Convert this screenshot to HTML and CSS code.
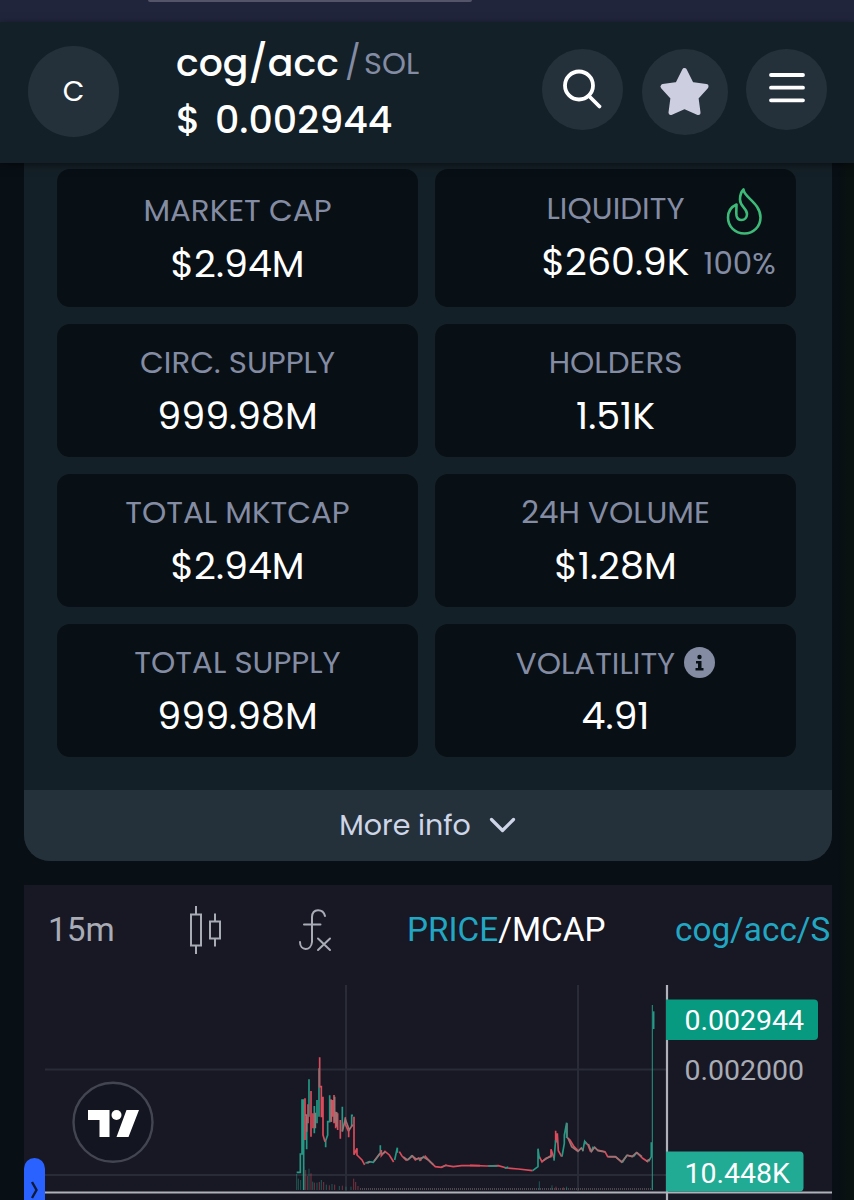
FILE: index.html
```html
<!DOCTYPE html>
<html lang="en">
	<head>
		<meta charset="utf-8">
		<title>cog/acc / SOL</title>
		<link rel="stylesheet" href="styles.css">
	</head>
	<body>
		<div class="browser"><div class="urlbar"></div></div>
		<header class="header">
			<div class="avatar">C</div>
			<div class="pair">
				<div class="pairName"><span class="token">cog/acc</span><span class="slash">/</span><span class="quote">SOL</span></div>
				<div class="price"><span class="currency">$</span><span class="amount">0.002944</span></div>
			</div>
			<div class="round search">
				<svg width="81" height="81" viewBox="0 0 81 81"><circle cx="37" cy="36.500" r="14" /><path d="M47 47L57.500 57.500" /></svg>
			</div>
			<div class="round star">
				<svg width="86" height="86" viewBox="0 0 86 86"><path d="M42.500 21.500L49.500 35.500L64 37.500L54 48.500L56 63.500L42.500 57.500L29 63.500L31 48.500L21 37.500L35.500 35.500Z" /></svg>
			</div>
			<div class="round menu">
				<svg width="81" height="81" viewBox="0 0 81 81"><path d="M25 26H57M25 38.700H57M25 51.300H57" /></svg>
			</div>
		</header>

		<main class="panel">
			<div class="stats">
				<div class="card">
					<div class="label">MARKET CAP</div>
					<div class="value">$2.94M</div>
				</div>
				<div class="card liquidity">
					<div class="main">
						<div class="label">LIQUIDITY</div>
						<div class="value">$260.9K</div>
					</div>
					<div class="burn">
						<svg width="40" height="50" viewBox="0 0 40 50"><path d="M19.500 2.500C19.500 10 36.500 16 36.500 30.500C36.500 39.500 29.500 46.500 20.500 46.500C11 46.500 4 39.500 4 30.500C4 24.500 7 20 12.500 17.500C12.500 22 12 25 12.500 28.500C13 31.500 15 33 17.500 33C20.500 33 23 30.500 23 27C23 21 16 20 16 12.500C16 8 17 5 19.500 2.500Z" /></svg>
						<div class="percent">100%</div>
					</div>
				</div>
				<div class="card">
					<div class="label">CIRC. SUPPLY</div>
					<div class="value">999.98M</div>
				</div>
				<div class="card">
					<div class="label">HOLDERS</div>
					<div class="value">1.51K</div>
				</div>
				<div class="card">
					<div class="label">TOTAL MKTCAP</div>
					<div class="value">$2.94M</div>
				</div>
				<div class="card">
					<div class="label">24H VOLUME</div>
					<div class="value">$1.28M</div>
				</div>
				<div class="card">
					<div class="label">TOTAL SUPPLY</div>
					<div class="value">999.98M</div>
				</div>
				<div class="card">
					<div class="label volatility"><span>VOLATILITY</span>
						<svg class="info" width="31" height="31" viewBox="0 0 31 31"><circle class="disc" cx="15.500" cy="15.500" r="15.500" /><circle cx="15.500" cy="10" r="2.200" /><path d="M12 14H17.500V21H19.500V23.500H11.500V21H14V16.500H12Z" /></svg>
					</div>
					<div class="value">4.91</div>
				</div>
			</div>
			<div class="more">
				<span>More info</span>
				<svg width="27" height="17" viewBox="0 0 27 17"><path d="M2.500 2.500L13.500 13.500L24.500 2.500" /></svg>
			</div>
		</main>

		<section class="chart">
			<div class="toolbar">
				<span class="interval">15m</span>
				<svg class="candles" width="34" height="48" viewBox="0 0 34 48"><path d="M2 8.500H12V39.500H2ZM7 0V8.500M7 39.500V48M21 15.500H31V32.500H21ZM26 7.500V15.500M26 32.500V40.500" /></svg>
				<svg class="fx" width="34" height="44" viewBox="0 0 34 44"><path d="M27 8C25 0.500 14.500 0 14 9V34C13 43.500 2 43 2 34M6 16.500H22.500M20 30.500L32 42M32 30.500L20 42" /></svg>
				<span class="mode"><b>PRICE</b>/MCAP</span>
				<span class="symbol">cog/acc/S</span>
			</div>
			<svg class="plot" width="808" height="215" viewBox="24 985 808 215">
				<path class="grid" d="M346 985V1191M578 985V1191M45 1069.500H666M45 1175H666" />

				<!-- volume -->
				<g transform="translate(280 980) scale(.3333)">
					<path class="vol up" d="M50 582V630M55 596V630M62 600V630M71 560V630M87 566V630M98 605V630M111 608V630M124 600V630M139 614V630M156 612V630M178 618V630M198 620V630M213 620V630" />
					<path class="vol down" d="M77 570V630M82 588V630M93 580V630M103 608V630M118 606V630M131 606V630M148 616V630M164 614V630M187 617V630M221 596V630M227 606V630M234 618V630" />
					<path class="vol dots" d="M240 627H1118" />
					<path class="vol up" d="M778 604V630M816 616V630M860 620V630M1117 600V630" />
					<path class="vol down" d="M828 620V630M850 622V630" />
				</g>

				<!-- price, left half -->
				<g transform="translate(280 980) scale(.3333)">
					<path class="line up" d="M50 577H61V522H66V360H71V630M87 298V410M80 410V508M103 378V460M111 360V430M117 265V410M137 502V482L143 465V425H149V346M187 380V455M215 440V406H219M256 550L268 545L280 547L292 532L301 520V496M344 540L352 503V518M384 540L396 526M418 543L432 528M484 562L500 555" />
					<path class="line down" d="M75 355V480M84 430V373M93 333V470M99 445V400M119 232V320H124V412M129 350V465L135 485M153 358V425M158 360V410M162 345V430M167 395V445M173 400V450M181 420V476M196 412V433L206 455V472M222 410V524L231 505V525L246 540L254 555M304 510V527L315 514L328 525L341 546M358 515L366 528L380 542M396 526L406 540L416 534L424 542M434 527L450 545L466 560L484 562L497 556L520 560L545 557H600" />
					<path class="line mix" d="M75 405H80V455M106 398V445M154 360V425M164 350V425M170 396V440M187 454L196 418L208 450L218 434M262 550L270 545M282 544L300 520M306 522L316 516M370 531L382 540L397 528L408 537L420 535L432 532L445 540L460 554" />
				</g>

				<!-- price, right half -->
				<g transform="translate(470 980) scale(.3333)">
					<path class="line down" d="M0 556L50 558L85 557L110 564L145 567L188 572M208 530L216 546L228 535L243 530V508L252 535M257 452V485H262V460L265 512L275 530M291 430V472L300 480L312 500L324 512M345 485L354 495L362 515M382 510L405 515L413 530L438 531L457 548M475 527L490 530M500 517L518 535L535 546" />
					<path class="line up" d="M55 558H82M104 565L115 561M188 572L204 560V506L208 536M252 542L257 480M276 530L283 490V465L290 428V474M338 514L344 484L350 493M364 515L370 500M457 548L471 525M490 530L500 518M536 544L544 530V487" />
					<path class="line mix" d="M220 542L245 526M294 474L305 500L324 514L334 504L340 512M355 492L364 515L374 502L384 512L405 516M415 530L436 530L455 546L472 526L486 530L500 518L516 530M528 544L540 538" />
					<path class="line up thin" d="M547 75V630" />
					<path class="line up" d="M551 94V147" />
				</g>

				<path class="axis" d="M667 985V1200M45 1192.500H832" />
				<path class="tag price" d="M666 999.500H814Q818 999.500 818 1003.500V1036Q818 1040 814 1040H666Z" />
				<path class="tag volume" d="M666 1151.500H799.500Q803.500 1151.500 803.500 1155.500V1187.500Q803.500 1191.500 799.500 1191.500H666Z" />
				<text class="white" x="684.500" y="1030">0.002944</text>
				<text class="grey" x="684.500" y="1079.500">0.002000</text>
				<text class="white" x="684.500" y="1182.500">10.448K</text>

				<g class="logo">
					<circle class="ring" cx="113" cy="1122.300" r="39.500" />
					<path d="M88 1110H109.500V1137H99.500V1120H88ZM126.500 1110H139L128.500 1137H116.500Z" />
					<circle cx="116.500" cy="1115" r="5" />
				</g>

				<path class="drawer" d="M24 1200V1168.500A10.500 10.500 0 0 1 45 1168.500V1200Z" />
				<path class="drawerArrow" d="M32 1182L36.500 1190L32 1198" />
			</svg>
		</section>
	</body>
</html>
```
FILE: styles.css
```css
* {
	box-sizing: border-box;
}

body {
	margin: 0;
	height: 1200px;
	overflow: hidden;
	background: linear-gradient(to right, #080f15 838px, #0a1111 846px);
	font-family: Poppins, Inter, "Liberation Sans", sans-serif;
	color: #fff;
}

svg {
	display: block;
	fill: none;
	flex: none;
}

.browser {
	height: 22px;
	background: #21253c;
}

.urlbar {
	width: 324px;
	height: 2px;
	margin-left: 148px;
	background: #555569;
	border-radius: 0 0 12px 12px;
}

/* header */

.header {
	position: relative;
	display: flex;
	height: 141px;
	padding-left: 28px;
	background: #142027;
	box-shadow: 0 2px 8px rgba(0, 0, 0, 0.5);
}

.header > div {
	flex: none;
}

.avatar {
	width: 91px;
	height: 91px;
	margin-top: 24px;
	border-radius: 50%;
	background: #24313b;
	font-size: 28px;
	line-height: 92px;
	text-align: center;
}

.pair {
	width: 422px;
	padding: 13px 0 0 57px;
	white-space: nowrap;
}

.pairName {
	display: flex;
	height: 57px;
	line-height: 56px;
}

.token {
	width: 169px;
	font-size: 37.8px;
	font-weight: 500;
}

.slash, .quote {
	color: #848ca3;
	font-size: 30.5px;
	line-height: 58px;
}

.slash {
	width: 19px;
	font-size: 33px;
	line-height: 56px;
}

.price {
	display: flex;
	height: 56px;
	font-size: 38px;
	font-weight: 500;
	line-height: 56px;
}

.currency {
	width: 39px;
}

.round {
	border-radius: 50%;
	background: #24313b;
}

.search {
	width: 81px;
	height: 81px;
	margin: 27px 0 0 1px;
}

.star {
	width: 86px;
	height: 86px;
	margin: 27px 0 0 19px;
}

.menu {
	width: 81px;
	height: 81px;
	margin: 27px 0 0 18px;
}

.search svg, .menu svg {
	stroke: #fff;
	stroke-width: 3.8;
	stroke-linecap: round;
}

.star svg {
	fill: #cdcfe0;
	stroke: #cdcfe0;
	stroke-width: 5;
	stroke-linejoin: round;
}

/* stats */

.panel {
	width: 808px;
	height: 698px;
	margin-left: 24px;
	padding-top: 6px;
	background: #142027;
	border-radius: 0 0 26px 26px;
	overflow: hidden;
}

.stats {
	display: grid;
	grid-template-columns: 361px 361px;
	grid-template-rows: 138px 133px 133px 133px;
	gap: 17px;
	height: 621px;
	padding: 0 33px;
}

.card {
	padding-top: 13px;
	border-radius: 13px;
	background: #080f15;
	text-align: center;
	white-space: nowrap;
}

.card:first-child {
	padding-top: 16px;
}

.label {
	height: 53px;
	color: #848ca3;
	font-size: 30.9px;
	line-height: 52px;
}

.value {
	height: 52px;
	font-size: 38px;
	line-height: 52px;
}

.liquidity {
	display: grid;
	grid-template-columns: 1fr auto 1fr;
	column-gap: 14px;
	padding-top: 14px;
}

.liquidity .main {
	grid-column: 2;
}

.burn svg {
	margin: 4px 0 0 20px;
	stroke: #3dba78;
	stroke-width: 2.6;
	stroke-linejoin: round;
}

.percent {
	color: #848ca3;
	font-size: 30.9px;
	line-height: 54px;
	text-align: left;
}

.volatility {
	display: flex;
	justify-content: center;
	align-items: center;
	gap: 9px;
}

.info {
	margin-bottom: 3px;
	fill: #080f15;
}

.info .disc {
	fill: #848ca3;
}

.more {
	display: flex;
	justify-content: center;
	align-items: center;
	gap: 18px;
	height: 71px;
	padding-right: 1px;
	background: #24313b;
	color: #cdd5e6;
	font-size: 28.5px;
}

.more svg {
	stroke: #cdd5e6;
	stroke-width: 3.2;
	stroke-linecap: round;
	stroke-linejoin: round;
}

/* chart */

.chart {
	width: 808px;
	height: 315px;
	margin: 24px 0 0 24px;
	background: #171824;
	font-family: Roboto, "Liberation Sans", sans-serif;
	overflow: hidden;
}

.toolbar {
	display: flex;
	height: 100px;
	padding-left: 24px;
	font-size: 33.3px;
	line-height: 90px;
	white-space: nowrap;
}

.toolbar span {
	flex: none;
}

.toolbar svg {
	stroke: #a9abb5;
	stroke-width: 2;
}

.interval {
	width: 141px;
	color: #a9abb5;
}

.candles {
	margin-top: 21px;
}

.fx {
	margin: 23px 0 0 75px;
	stroke-linecap: round;
}

.mode {
	width: 268px;
	margin-left: 75px;
}

.mode b {
	color: #22a7c3;
	font-weight: 400;
}

.symbol {
	color: #22a7c3;
}

.grid {
	stroke: #292b36;
	stroke-width: 2;
}

.axis {
	stroke: #b0b1ba;
	stroke-width: 2.2;
}

.line {
	stroke-width: 5;
}

.thin {
	stroke-width: 3;
}

.vol {
	stroke-width: 3;
	opacity: 0.5;
}

.up {
	stroke: #249a86;
}

.down {
	stroke: #dc4b5b;
}

.mix {
	stroke: #9a7475;
}

.dots {
	stroke: #857579;
	stroke-width: 6;
	stroke-dasharray: 3 3;
}

.tag.price {
	fill: #089981;
}

.tag.volume {
	fill: #22ab94;
}

.plot text {
	font-size: 28.5px;
}

.white {
	fill: #fff;
}

.grey {
	fill: #a9abb5;
}

.logo {
	fill: #fff;
}

.ring {
	fill: #131621;
	stroke: #434550;
	stroke-width: 2.4;
}

.drawer {
	fill: #2962ff;
}

.drawerArrow {
	stroke: #101a3a;
	stroke-width: 2.4;
}
```
